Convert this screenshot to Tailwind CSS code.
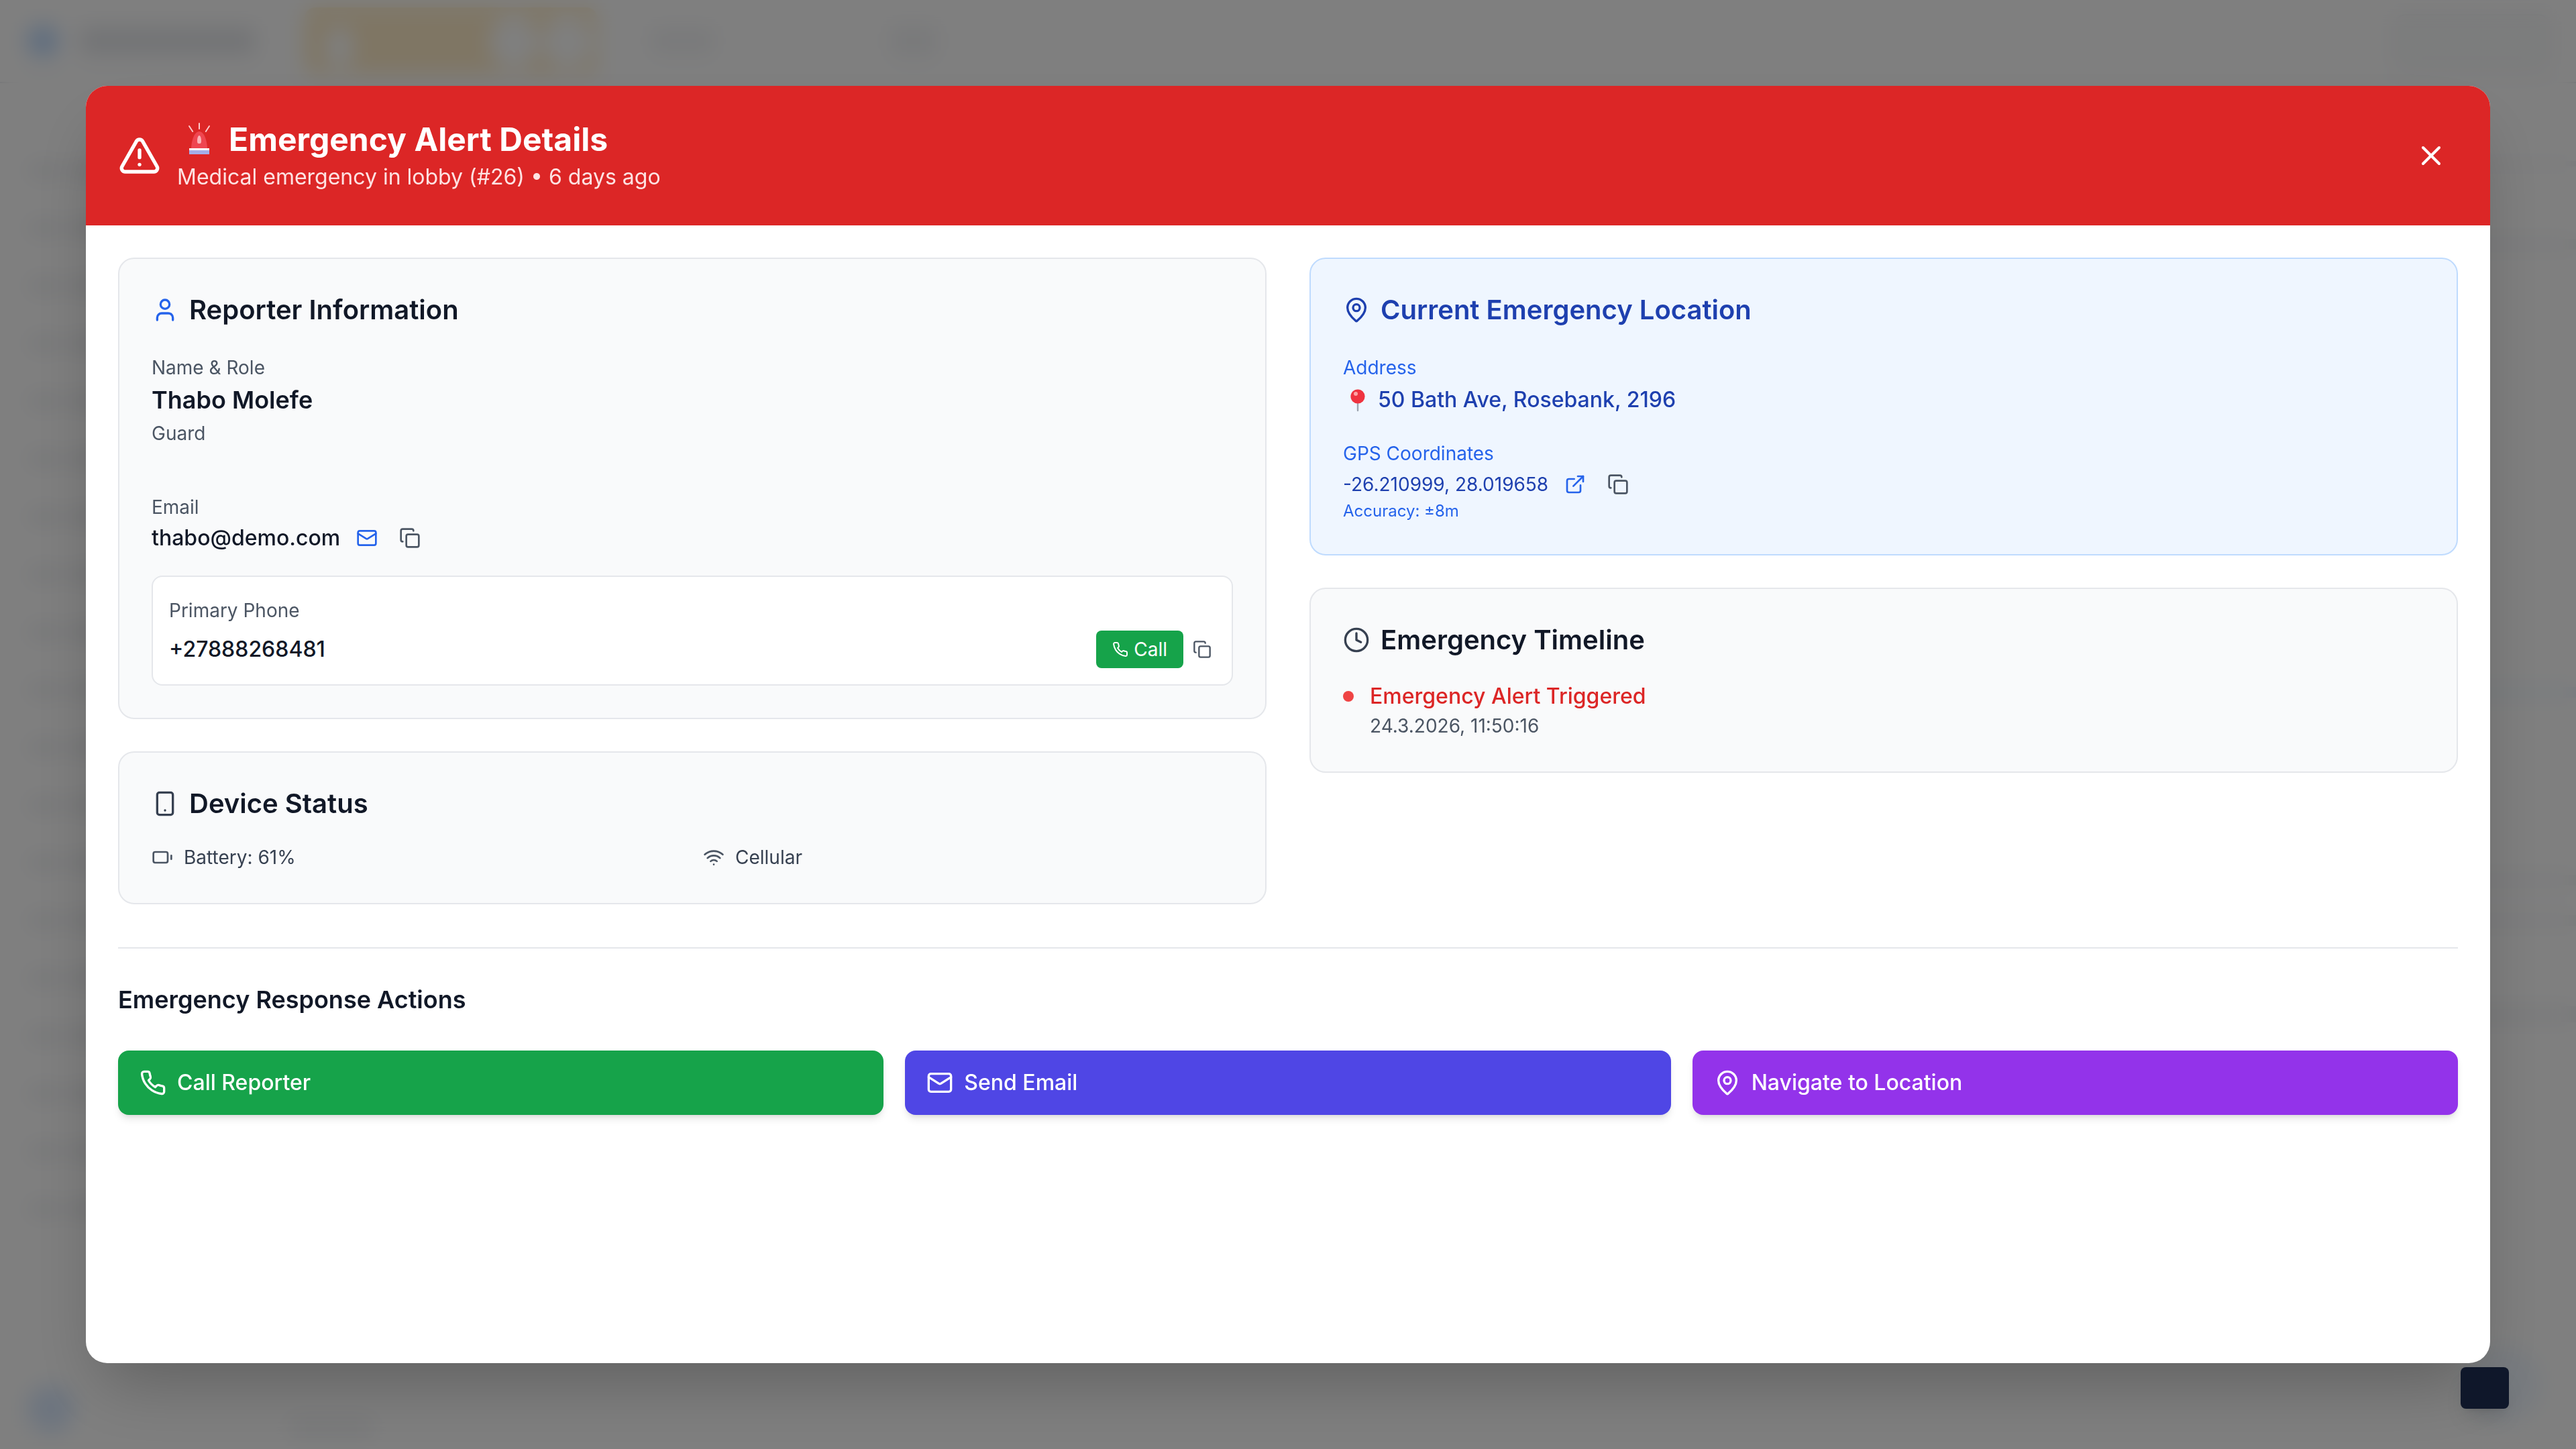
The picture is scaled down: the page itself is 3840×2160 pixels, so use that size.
<!DOCTYPE html>
<html lang="en">
<head>
    <meta charset="UTF-8">
    <title>Emergency Alert Details</title>
    <script src="https://cdn.jsdelivr.net/npm/@tailwindcss/browser@4"></script>
</head>
<body class="[zoom:2] font-[Inter,sans-serif]">

    <!-- icon set -->
    <svg class="hidden">
        <symbol id="i-copy" viewBox="0 0 24 24"><rect width="14" height="14" x="8" y="8" rx="2" ry="2"/><path d="M4 16c-1.1 0-2-.9-2-2V4c0-1.1.9-2 2-2h10c1.1 0 2 .9 2 2"/></symbol>
        <symbol id="i-phone" viewBox="0 0 24 24"><path d="M22 16.92v3a2 2 0 0 1-2.18 2 19.79 19.79 0 0 1-8.63-3.07 19.5 19.5 0 0 1-6-6 19.79 19.79 0 0 1-3.07-8.67A2 2 0 0 1 4.11 2h3a2 2 0 0 1 2 1.72 12.84 12.84 0 0 0 .7 2.81 2 2 0 0 1-.45 2.11L8.09 9.91a16 16 0 0 0 6 6l1.27-1.27a2 2 0 0 1 2.11-.45 12.84 12.84 0 0 0 2.81.7A2 2 0 0 1 22 16.92z"/></symbol>
        <symbol id="i-mail" viewBox="0 0 24 24"><rect width="20" height="16" x="2" y="4" rx="2"/><path d="m22 7-8.97 5.7a1.94 1.94 0 0 1-2.06 0L2 7"/></symbol>
        <symbol id="i-pin" viewBox="0 0 24 24"><path d="M20 10c0 4.993-5.539 10.193-7.399 11.799a1 1 0 0 1-1.202 0C9.539 20.193 4 14.993 4 10a8 8 0 0 1 16 0"/><circle cx="12" cy="10" r="3"/></symbol>
    </svg>

    <div class="relative w-[1920px] h-[1080px] overflow-hidden bg-white">

        <!-- page behind the modal -->
        <div class="absolute inset-0 flex flex-col">
            <div class="h-[62px] flex items-center px-5 gap-4 border-b border-gray-200">
                <div class="w-6 h-6 rounded-full bg-blue-200"></div>
                <div class="w-[130px] h-5 rounded bg-gray-200"></div>
                <div class="ml-[21px] w-[218px] h-[50px] rounded-lg bg-[#ffecc8] flex items-end justify-end gap-1 p-1">
                    <div class="mr-auto ml-3 w-5 h-8 rounded-full bg-white"></div>
                    <div class="w-9 h-10 rounded-full bg-white"></div>
                    <div class="w-9 h-10 rounded-full bg-white"></div>
                </div>
                <div class="ml-6 w-12 h-5 rounded bg-gray-100"></div>
                <div class="ml-[114px] w-9 h-6 rounded bg-gray-100"></div>
                <div class="ml-auto w-[115px] h-10 rounded-lg border border-gray-300 bg-gray-50"></div>
            </div>
            <div id="rows" class="pt-[61px] pl-[22px] flex flex-col"></div>
        </div>
        <div class="absolute right-0 top-[120px] w-[80px] h-1 bg-gray-100"></div>
        <div class="absolute right-0 top-[178px] w-[80px] h-2 bg-gray-100"></div>
        <div class="absolute right-0 top-[512px] w-[80px] h-2 bg-blue-50"></div>
        <div class="absolute right-0 top-[652px] w-[80px] h-2 bg-gray-100"></div>
        <div class="absolute right-0 top-[682px] w-[80px] h-2 bg-gray-100"></div>
        <div class="absolute right-0 top-[750px] w-[80px] h-3 bg-gray-100"></div>
        <div class="absolute left-[20px] top-[1032px] w-9 h-9 rounded-full bg-blue-100"></div>
        <div class="absolute left-[215px] top-[1056px] w-16 h-4 rounded bg-gray-100"></div>
        <div class="absolute left-[1838px] top-[1004px] w-[56px] h-[56px] rounded-full bg-blue-50"></div>

        <!-- overlay + modal -->
        <div class="absolute inset-0 bg-black/50 backdrop-blur-sm p-16">
            <div class="h-full bg-white rounded-2xl shadow-2xl overflow-hidden">

                <header class="bg-[#dc2626] text-white p-6 flex items-center justify-between">
                    <div class="flex items-center gap-3">
                        <svg class="w-8 h-8" viewBox="0 0 24 24" fill="none" stroke="currentColor" stroke-width="2" stroke-linecap="round" stroke-linejoin="round"><path d="m21.73 18-8-14a2 2 0 0 0-3.48 0l-8 14A2 2 0 0 0 4 21h16a2 2 0 0 0 1.73-3"/><path d="M12 9v4"/><path d="M12 17h.01"/></svg>
                        <div>
                            <div class="flex items-center gap-2">
                                <svg class="w-[30.5px] h-8" viewBox="0 0 30.5 32">
                                    <path d="M16.500 4v4M9 6l2.600 4M24 6l-2.600 4" stroke="#fecaca" stroke-width="1" stroke-linecap="round" fill="none"/>
                                    <path d="M10.500 23c0-5 2-13 6-13s6 8 6 13z" fill="#ef4650"/>
                                    <path d="M15 17c0-2 .6-4 1.500-4s1.500 2 1.500 4-.6 2-1.500 2-1.500 0-1.500-2z" fill="#fbb4b8"/>
                                    <rect x="9" y="22.500" width="15" height="1.500" fill="#fff"/>
                                    <rect x="9" y="24" width="15" height="3" fill="#a5aee8"/>
                                </svg>
                                <h2 class="text-2xl font-bold">Emergency Alert Details</h2>
                            </div>
                            <p class="text-[#fee2e2]">Medical emergency in lobby (#26) • 6 days ago</p>
                        </div>
                    </div>
                    <button class="p-2">
                        <svg class="w-6 h-6" viewBox="0 0 24 24" fill="none" stroke="currentColor" stroke-width="2" stroke-linecap="round" stroke-linejoin="round"><path d="M18 6 6 18"/><path d="m6 6 12 12"/></svg>
                    </button>
                </header>

                <main class="p-6">
                    <div class="grid grid-cols-2 gap-8">

                        <div class="flex flex-col gap-6">
                            <section class="bg-[#f9fafb] border border-[#e5e7eb] rounded-xl p-6">
                                <h3 class="flex items-center gap-2 text-xl font-semibold text-[#111827] mb-4">
                                    <svg class="w-5 h-5 text-[#2563eb]" viewBox="0 0 24 24" fill="none" stroke="currentColor" stroke-width="2" stroke-linecap="round" stroke-linejoin="round"><path d="M19 21v-2a4 4 0 0 0-4-4H9a4 4 0 0 0-4 4v2"/><circle cx="12" cy="7" r="4"/></svg>
                                    Reporter Information
                                </h3>
                                <div class="flex flex-col gap-4">
                                    <div class="mb-4">
                                        <p class="text-sm leading-6 translate-y-px text-[#4b5563]">Name &amp; Role</p>
                                        <p class="-mt-px mb-px text-lg font-semibold text-[#111827]">Thabo Molefe</p>
                                        <p class="text-sm text-[#4b5563]">Guard</p>
                                    </div>
                                    <div>
                                        <p class="text-sm leading-6 translate-y-px text-[#4b5563]">Email</p>
                                        <div class="flex items-center gap-2 text-[#111827] font-medium">
                                            <span>thabo@demo.com</span>
                                            <button class="p-1 text-[#2563eb]"><svg class="w-4 h-4" fill="none" stroke="currentColor" stroke-width="2" stroke-linecap="round" stroke-linejoin="round"><use href="#i-mail"/></svg></button>
                                            <button class="p-1 text-[#4b5563]"><svg class="w-4 h-4" fill="none" stroke="currentColor" stroke-width="2" stroke-linecap="round" stroke-linejoin="round"><use href="#i-copy"/></svg></button>
                                        </div>
                                    </div>
                                    <div class="bg-white border border-[#e5e7eb] rounded-lg p-3">
                                        <p class="text-sm leading-6 translate-y-px text-[#4b5563] mb-1">Primary Phone</p>
                                        <div class="flex items-center justify-between text-[#111827]">
                                            <span class="font-medium">+27888268481</span>
                                            <div class="flex items-center gap-[5px] mr-px">
                                                <button class="flex items-center gap-1 px-3 py-1 rounded bg-[#16a34a] text-white text-sm">
                                                    <svg class="w-3 h-3" fill="none" stroke="currentColor" stroke-width="2" stroke-linecap="round" stroke-linejoin="round"><use href="#i-phone"/></svg>
                                                    Call
                                                </button>
                                                <button class="p-0.5 text-[#4b5563]"><svg class="w-3.5 h-3.5" fill="none" stroke="currentColor" stroke-width="2" stroke-linecap="round" stroke-linejoin="round"><use href="#i-copy"/></svg></button>
                                            </div>
                                        </div>
                                    </div>
                                </div>
                            </section>

                            <section class="bg-[#f9fafb] border border-[#e5e7eb] rounded-xl p-6">
                                <h3 class="flex items-center gap-2 text-xl font-semibold text-[#111827] mb-4">
                                    <svg class="w-5 h-5 text-[#374151]" viewBox="0 0 24 24" fill="none" stroke="currentColor" stroke-width="2" stroke-linecap="round" stroke-linejoin="round"><rect width="14" height="20" x="5" y="2" rx="2" ry="2"/><path d="M12 18h.01"/></svg>
                                    Device Status
                                </h3>
                                <div class="grid grid-cols-2 gap-4 text-sm text-[#374151]">
                                    <div class="flex items-center gap-2">
                                        <svg class="w-4 h-4 text-[#4b5563]" viewBox="0 0 24 24" fill="none" stroke="currentColor" stroke-width="2" stroke-linecap="round" stroke-linejoin="round"><rect width="16" height="12" x="2" y="6" rx="2"/><path d="M22 14v-4"/></svg>
                                        Battery: 61%
                                    </div>
                                    <div class="flex items-center gap-2">
                                        <svg class="w-4 h-4 text-[#4b5563]" viewBox="0 0 24 24" fill="none" stroke="currentColor" stroke-width="2" stroke-linecap="round" stroke-linejoin="round"><path d="M12 20h.01"/><path d="M2 8.820a15 15 0 0 1 20 0"/><path d="M5 12.859a10 10 0 0 1 14 0"/><path d="M8.500 16.429a5 5 0 0 1 7 0"/></svg>
                                        Cellular
                                    </div>
                                </div>
                            </section>
                        </div>

                        <div class="flex flex-col gap-6">
                            <section class="bg-[#eff6ff] border border-[#bfdbfe] rounded-xl p-6">
                                <h3 class="flex items-center gap-2 text-xl font-semibold text-[#1e40af] mb-4">
                                    <svg class="w-5 h-5" fill="none" stroke="currentColor" stroke-width="2" stroke-linecap="round" stroke-linejoin="round"><use href="#i-pin"/></svg>
                                    Current Emergency Location
                                </h3>
                                <p class="text-sm leading-6 translate-y-px text-[#2563eb]">Address</p>
                                <div class="flex items-center gap-1.5 text-[#1e40af] font-medium mb-[15px] pt-px">
                                    <svg class="w-5 h-6" viewBox="0 0 20 24">
                                        <path d="M11 13v7" stroke="#9ca3af" stroke-width="1.200" stroke-linecap="round"/>
                                        <circle cx="11" cy="9.500" r="5.300" fill="#ef3340"/>
                                        <circle cx="9.500" cy="7.500" r="1.500" fill="#fca5a5"/>
                                    </svg>
                                    50 Bath Ave, Rosebank, 2196
                                </div>
                                <p class="text-sm leading-6 translate-y-px text-[#2563eb]">GPS Coordinates</p>
                                <div class="flex items-center gap-2 text-sm text-[#1e40af]">
                                    <span>-26.210999, 28.019658</span>
                                    <button class="p-1 text-[#2563eb]"><svg class="w-4 h-4" viewBox="0 0 24 24" fill="none" stroke="currentColor" stroke-width="2" stroke-linecap="round" stroke-linejoin="round"><path d="M15 3h6v6"/><path d="M10 14 21 3"/><path d="M18 13v6a2 2 0 0 1-2 2H5a2 2 0 0 1-2-2V8a2 2 0 0 1 2-2h6"/></svg></button>
                                    <button class="p-1 text-[#4b5563]"><svg class="w-4 h-4" fill="none" stroke="currentColor" stroke-width="2" stroke-linecap="round" stroke-linejoin="round"><use href="#i-copy"/></svg></button>
                                </div>
                                <p class="text-xs text-[#2563eb]">Accuracy: ±8m</p>
                            </section>

                            <section class="bg-[#f9fafb] border border-[#e5e7eb] rounded-xl p-6">
                                <h3 class="flex items-center gap-2 text-xl font-semibold text-[#111827] mb-4">
                                    <svg class="w-5 h-5 text-[#374151]" viewBox="0 0 24 24" fill="none" stroke="currentColor" stroke-width="2" stroke-linecap="round" stroke-linejoin="round"><circle cx="12" cy="12" r="10"/><polyline points="12 6 12 12 16 14"/></svg>
                                    Emergency Timeline
                                </h3>
                                <div class="flex items-start gap-3">
                                    <div class="w-2 h-2 mt-2 rounded-full bg-[#ef4444]"></div>
                                    <div>
                                        <p class="text-[#dc2626] font-medium">Emergency Alert Triggered</p>
                                        <p class="text-sm text-[#4b5563]">24.3.2026, 11:50:16</p>
                                    </div>
                                </div>
                            </section>
                        </div>
                    </div>

                    <div class="mt-8 pt-6 border-t border-[#e5e7eb]">
                        <h3 class="text-lg font-semibold text-[#111827] mb-6">Emergency Response Actions</h3>
                        <div class="grid grid-cols-3 gap-4">
                            <button class="flex items-center gap-2 px-4 py-3 rounded-lg shadow-md bg-[#16a34a] text-white font-medium">
                                <svg class="w-5 h-5" fill="none" stroke="currentColor" stroke-width="2" stroke-linecap="round" stroke-linejoin="round"><use href="#i-phone"/></svg>
                                Call Reporter
                            </button>
                            <button class="flex items-center gap-2 px-4 py-3 rounded-lg shadow-md bg-[#4f46e5] text-white font-medium">
                                <svg class="w-5 h-5" fill="none" stroke="currentColor" stroke-width="2" stroke-linecap="round" stroke-linejoin="round"><use href="#i-mail"/></svg>
                                Send Email
                            </button>
                            <button class="flex items-center gap-2 px-4 py-3 rounded-lg shadow-md bg-[#9333ea] text-white font-medium">
                                <svg class="w-5 h-5" fill="none" stroke="currentColor" stroke-width="2" stroke-linecap="round" stroke-linejoin="round"><use href="#i-pin"/></svg>
                                Navigate to Location
                            </button>
                        </div>
                    </div>
                </main>
            </div>
        </div>

        <!-- dark chip sitting above everything -->
        <div class="absolute left-[1834px] top-[1019px] w-9 h-[31px] rounded bg-[#0f172a] shadow-lg"></div>
    </div>

    <script>
        // sidebar rows under the overlay, only visible as blurred bands
        const rows = document.getElementById('rows');
        for (let i = 0; i < 19; i++) {
            rows.innerHTML += `<div class="h-[43px] flex gap-1.5"><div class="w-[22px] h-2 rounded bg-gray-200"></div><div class="w-[120px] h-2 rounded bg-gray-200"></div></div>`;
        }
    </script>
</body>
</html>
